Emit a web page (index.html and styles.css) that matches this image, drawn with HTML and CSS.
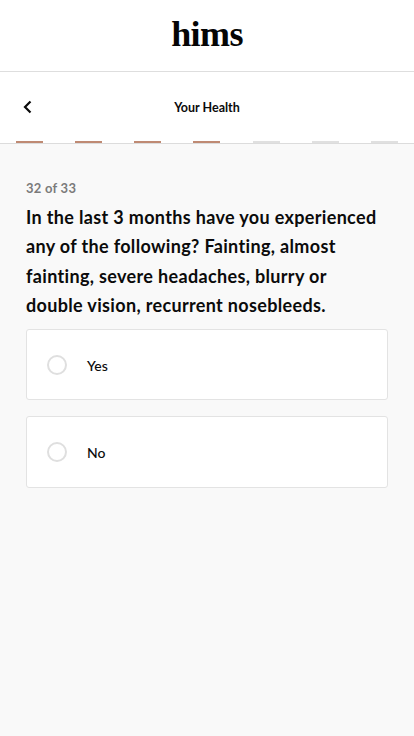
FILE: index.html
```html
<!DOCTYPE html>
<html lang="en">
<head>
<meta charset="utf-8">
<title>Your Health</title>
<link rel="stylesheet" href="styles.css">
</head>
<body>
<header class="brand"><span class="logo">hims</span></header>
<nav class="section-bar">
  <div class="section-row">
    <button class="back" aria-label="Back">
      <svg width="9" height="14" viewBox="0 0 9 14"><path d="M7.5 1.5 2 7l5.5 5.5" fill="none" stroke="#0b0b0b" stroke-width="2.2"/></svg>
    </button>
    <span class="section-title">Your Health</span>
  </div>
  <div class="progress">
    <i class="seg done"></i><i class="seg done"></i><i class="seg done"></i><i class="seg done"></i><i class="seg"></i><i class="seg"></i><i class="seg"></i>
  </div>
</nav>
<main class="content">
  <p class="count">32 of 33</p>
  <h1 class="question">In the last 3 months have you experienced any of the following? Fainting, almost fainting, severe headaches, blurry or double vision, recurrent nosebleeds.</h1>
  <div class="options">
    <label class="option"><span class="radio"></span><span class="option-text">Yes</span></label>
    <label class="option"><span class="radio"></span><span class="option-text">No</span></label>
  </div>
</main>
</body>
</html>
```
FILE: styles.css
```css
* { box-sizing: border-box; }
html, body { margin: 0; height: 100%; }
body { background: #f9f9f9; font-family: Lato, "Liberation Sans", sans-serif; color: #0b0b0b; overflow: hidden; }
.brand { height: 72px; background: #fff; border-bottom: 1px solid #dedede; display: flex; align-items: center; justify-content: center; padding-bottom: 4px; }
.logo { font-family: "Liberation Serif", serif; font-weight: 700; font-size: 36px; letter-spacing: -0.6px; line-height: 1; color: #050505; }
.section-bar { height: 72px; background: #fff; border-bottom: 1px solid #dcdcdc; display: flex; flex-direction: column; }
.section-row { height: 70px; position: relative; display: flex; align-items: center; justify-content: center; }
.back { position: absolute; left: 23px; top: 28px; padding: 0; border: 0; background: none; display: flex; }
.section-title { font-size: 12.5px; font-weight: 700; }
.progress { display: flex; justify-content: space-between; padding: 0 16px; margin-top: -1px; }
.seg { display: block; width: 27px; height: 2px; background: #e0e0e0; }
.seg.done { background: #bf8a73; }
.content { padding: 35px 26px 0; }
.count { margin: 0 0 6px; font-size: 13px; line-height: 18px; font-weight: 700; color: #7b7b7b; letter-spacing: 0.25px; }
.question { margin: 0 0 8.7px; font-size: 18px; line-height: 29.3px; font-weight: 700; letter-spacing: 0.34px; }
.options { display: flex; flex-direction: column; gap: 16px; }
.option { height: 71.5px; background: #fff; border: 1px solid #e3e3e3; border-radius: 3px; display: flex; align-items: center; padding-left: 20px; }
.radio { width: 20px; height: 20px; border: 2px solid #dfdfdf; border-radius: 50%; margin-right: 20px; }
.option-text { font-size: 14px; font-weight: 500; padding-top: 1px; }
```
